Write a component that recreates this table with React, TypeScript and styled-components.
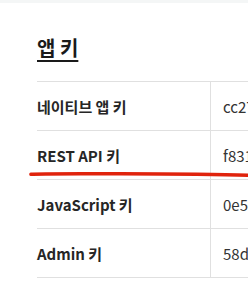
import React from "react";
import styled, { createGlobalStyle } from "styled-components";

const Global = createGlobalStyle`
  html, body {
    margin: 0;
    padding: 0;
    background: #ffffff;
    overflow: hidden;
  }
  body {
    font-family: "Noto Sans CJK KR", "Noto Sans", sans-serif;
    color: #222;
  }
`;

const Page = styled.div`
  position: relative;
  width: 248px;
  height: 289px;
  overflow: hidden;
`;

const TopStrip = styled.div`
  height: 3px;
  background: #f4f6f6;
`;

const Section = styled.section`
  padding: 31px 0 0 37px;
`;

const Title = styled.h2`
  margin: 0;
  font-size: 20px;
  line-height: 28px;
  font-weight: 700;
  color: #1a1a1a;
  text-decoration: underline;
  text-decoration-thickness: 2px;
  text-underline-offset: 4px;
`;

const KeyTable = styled.div`
  margin-top: 19px;
  width: 480px;
  border-top: 1px solid #e0e0e0;
`;

const Row = styled.div`
  display: grid;
  grid-template-columns: 173px 1fr;
  height: 48px;
  border-bottom: 1px solid #e0e0e0;
`;

const Label = styled.div`
  display: flex;
  align-items: center;
  font-size: 15px;
  font-weight: 600;
  color: #262626;
  white-space: nowrap;
`;

const Value = styled.div`
  display: flex;
  align-items: center;
  padding-left: 12px;
  border-left: 1px solid #e0e0e0;
  font-size: 15px;
  font-weight: 400;
  color: #333;
  white-space: nowrap;
`;

const Mark = styled.svg`
  position: absolute;
  left: 0;
  top: 168px;
  width: 248px;
  height: 12px;
  pointer-events: none;
`;

const keys = [
  { label: "네이티브 앱 키", value: "cc27a1e4b09d3f5c82e7" },
  { label: "REST API 키", value: "f8316c0d2ab94e7f15c3" },
  { label: "JavaScript 키", value: "0e5f9b72d4c1a8e36f0b" },
  { label: "Admin 키", value: "58d2e7a04c91fb36d8a5" },
];

export default function App() {
  return (
    <Page>
      <Global />
      <TopStrip />
      <Section>
        <Title>앱 키</Title>
        <KeyTable>
          {keys.map((k) => (
            <Row key={k.label}>
              <Label>{k.label}</Label>
              <Value>{k.value}</Value>
            </Row>
          ))}
        </KeyTable>
      </Section>
      <Mark viewBox="0 0 248 12">
        <path
          d="M31 6.3 C 36 5.6, 60 5.6, 120 5.8 S 220 6.4, 248 7.2"
          stroke="#e0230c"
          strokeWidth="3.6"
          strokeLinecap="round"
          fill="none"
        />
      </Mark>
    </Page>
  );
}
